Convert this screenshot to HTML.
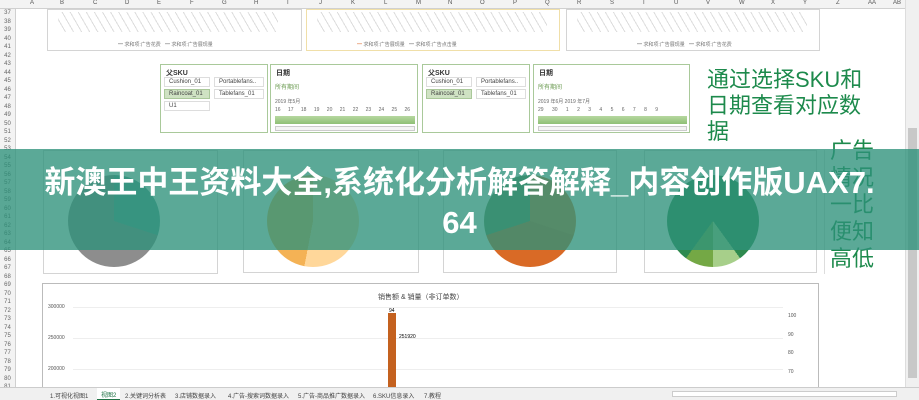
<!DOCTYPE html>
<html><head><meta charset="utf-8"><style>
*{margin:0;padding:0;box-sizing:border-box}
body{width:919px;height:400px;overflow:hidden;background:#fff;font-family:"Liberation Sans","Noto Sans CJK SC",sans-serif;position:relative}
.a{position:absolute}
.colh{top:0;left:0;width:905px;height:9px;background:#f3f3f3;border-bottom:1px solid #d0d0d0;font-size:6px;color:#555}
.colh span{position:absolute;top:0}
.rowh{left:0;top:9px;width:16px;height:378px;background:#f3f3f3;border-right:1px solid #d0d0d0;font-size:6px;color:#666;line-height:8.5px;text-align:center}
.box{border:1px solid #d4d4d4;background:#fff}
.sl{border:1px solid #a9c99a;background:#fff;font-size:6px;color:#333}
.sl b{position:absolute;left:5px;top:3px;font-size:7px}
.it{position:absolute;border:1px solid #ddd;height:10px;line-height:9px;padding-left:4px;font-size:6px;color:#444;width:46px}
.sel{background:#cfe2c3;border-color:#aac89a}
.bar{position:absolute;height:8px;background:linear-gradient(#b6d7a0,#8fbf75)}
.scr{position:absolute;height:5px;border:1px solid #ccc;background:#f4f4f4}
.pie{position:absolute;width:92px;height:92px;border-radius:50%}
.big{color:#1d8a4c;font-size:22px;line-height:26px}
.tab{top:387px;left:0;width:919px;height:13px;background:#f0f0f0;border-top:1px solid #ccc;font-size:6px;color:#444}
.tab span{position:absolute;top:3px}
</style></head><body>
<div class="a colh"><span style="left:30px">A</span><span style="left:60px">B</span><span style="left:93px">C</span><span style="left:125px">D</span><span style="left:157px">E</span><span style="left:190px">F</span><span style="left:222px">G</span><span style="left:254px">H</span><span style="left:287px">I</span><span style="left:319px">J</span><span style="left:351px">K</span><span style="left:384px">L</span><span style="left:416px">M</span><span style="left:448px">N</span><span style="left:480px">O</span><span style="left:513px">P</span><span style="left:545px">Q</span><span style="left:577px">R</span><span style="left:610px">S</span><span style="left:642px">T</span><span style="left:674px">U</span><span style="left:706px">V</span><span style="left:739px">W</span><span style="left:771px">X</span><span style="left:803px">Y</span><span style="left:836px">Z</span><span style="left:868px">AA</span><span style="left:893px">AB</span></div>
<div class="a rowh">37<br>38<br>39<br>40<br>41<br>42<br>43<br>44<br>45<br>46<br>47<br>48<br>49<br>50<br>51<br>52<br>53<br>54<br>55<br>56<br>57<br>58<br>59<br>60<br>61<br>62<br>63<br>64<br>65<br>66<br>67<br>68<br>69<br>70<br>71<br>72<br>73<br>74<br>75<br>76<br>77<br>78<br>79<br>80<br>81</div>
<div class="a" style="left:905px;top:0;width:14px;height:400px;background:#f0f0f0;border-left:1px solid #ddd"><div class="a" style="left:2px;top:128px;width:9px;height:250px;background:#c8c8c8"></div></div>

<div class="a box" style="left:47px;top:9px;width:255px;height:42px"><div class="a" style="left:70px;top:31px;font-size:5px;color:#777">━ 求和项:广告花费 &nbsp; ━ 求和项:广告展现量</div><div class="a" style="left:10px;top:2px;width:220px;height:20px;background:repeating-linear-gradient(60deg,transparent 0 6px,#ddd 6px 7px)"></div></div>
<div class="a box" style="left:306px;top:9px;width:254px;height:42px;border-color:#f0dfa8"><div class="a" style="left:50px;top:31px;font-size:5px;color:#777"><span style="color:#e07a40">━</span> 求和项:广告展现量 &nbsp; ━ 求和项:广告点击量</div><div class="a" style="left:10px;top:2px;width:230px;height:20px;background:repeating-linear-gradient(60deg,transparent 0 6px,#ddd 6px 7px)"></div></div>
<div class="a box" style="left:566px;top:9px;width:254px;height:42px"><div class="a" style="left:70px;top:31px;font-size:5px;color:#777">━ 求和项:广告展现量 &nbsp; ━ 求和项:广告花费</div><div class="a" style="left:10px;top:2px;width:230px;height:20px;background:repeating-linear-gradient(60deg,transparent 0 6px,#ddd 6px 7px)"></div></div>

<div class="a sl" style="left:160px;top:64px;width:108px;height:69px"><b>父SKU</b><div class="it" style="left:3px;top:12px">Cushion_01</div><div class="it" style="left:53px;top:12px;width:50px">Portablefans..</div><div class="it sel" style="left:3px;top:24px">Raincoat_01</div><div class="it" style="left:53px;top:24px;width:50px">Tablefans_01</div><div class="it" style="left:3px;top:36px">U1</div></div>
<div class="a sl" style="left:270px;top:64px;width:148px;height:69px"><b>日期</b><div class="a" style="left:4px;top:17px;color:#6a9a50">所有期间</div><div class="a" style="left:4px;top:33px;font-size:5px;color:#666">2019 年5月</div><div class="a" style="left:4px;top:42px;font-size:5px;color:#666;word-spacing:6px">16 17 18 19 20 21 22 23 24 25 26</div><div class="bar" style="left:4px;top:51px;width:140px"></div><div class="scr" style="left:4px;top:61px;width:140px"></div></div>
<div class="a sl" style="left:422px;top:64px;width:108px;height:69px"><b>父SKU</b><div class="it" style="left:3px;top:12px">Cushion_01</div><div class="it" style="left:53px;top:12px;width:50px">Portablefans..</div><div class="it sel" style="left:3px;top:24px">Raincoat_01</div><div class="it" style="left:53px;top:24px;width:50px">Tablefans_01</div></div>
<div class="a sl" style="left:533px;top:64px;width:157px;height:69px"><b>日期</b><div class="a" style="left:4px;top:17px;color:#6a9a50">所有期间</div><div class="a" style="left:4px;top:33px;font-size:5px;color:#666">2019 年6月 2019 年7月</div><div class="a" style="left:4px;top:42px;font-size:5px;color:#666;word-spacing:7px">29 30 1 2 3 4 5 6 7 8 9</div><div class="bar" style="left:4px;top:51px;width:149px"></div><div class="scr" style="left:4px;top:61px;width:149px"></div></div>

<div class="a big" style="left:707px;top:67px">通过选择SKU和<br>日期查看对应数<br>据</div>
<div class="a big" style="left:830px;top:137px;line-height:27px">广告<br>情况<br>一比<br>便知<br>高低</div>

<div class="a box" style="left:43px;top:150px;width:175px;height:124px"><div class="pie" style="left:24px;top:24px;background:conic-gradient(#5e9f97 0 30%,#8d8d8d 30% 100%)"></div></div>
<div class="a box" style="left:243px;top:150px;width:176px;height:123px"><div class="pie" style="left:23px;top:24px;background:conic-gradient(#ffd79a 0 53%,#f4b255 53% 100%)"></div></div>
<div class="a box" style="left:443px;top:150px;width:174px;height:123px"><div class="pie" style="left:40px;top:24px;background:conic-gradient(#e3762f 0 30%,#d96a26 30% 70%,#6b8f5a 70% 100%)"></div></div>
<div class="a box" style="left:644px;top:150px;width:173px;height:123px"><div class="pie" style="left:22px;top:24px;background:conic-gradient(#2e8a4f 0 40%,#a7cf8a 40% 50%,#74a845 50% 60%,#2e8a4f 60%)"></div></div>
<div class="a" style="left:824px;top:150px;width:1px;height:124px;background:#ddd"></div>

<div class="a box" style="left:42px;top:283px;width:777px;height:106px;border-color:#bbb">
<div class="a" style="left:335px;top:8px;font-size:7px;color:#444">销售额 &amp; 销量（非订单数）</div>
<div class="a" style="left:30px;top:23px;width:710px;height:1px;background:#eee"></div>
<div class="a" style="left:30px;top:54px;width:710px;height:1px;background:#eee"></div>
<div class="a" style="left:30px;top:85px;width:710px;height:1px;background:#eee"></div>
<div class="a" style="left:5px;top:20px;font-size:5px;color:#555">300000</div>
<div class="a" style="left:5px;top:51px;font-size:5px;color:#555">250000</div>
<div class="a" style="left:5px;top:82px;font-size:5px;color:#555">200000</div>
<div class="a" style="left:345px;top:29px;width:8px;height:80px;background:#c4611f"></div>
<div class="a" style="left:346px;top:24px;font-size:5px">94</div>
<div class="a" style="left:356px;top:50px;font-size:5px">251920</div>
<div class="a" style="left:745px;top:23px;font-size:5px;color:#555;line-height:18.5px">100<br>90<br>80<br>70<br>60</div>
</div>

<div class="a tab"><span style="left:50px">1.可视化视图1</span><span style="left:97px;top:0;height:12px;padding:2px 4px;background:#fff;color:#217346;border-bottom:1px solid #217346">视图2</span><span style="left:125px">2.关键词分析表</span><span style="left:175px">3.店铺数据录入</span><span style="left:228px">4.广告-搜索词数据录入</span><span style="left:298px">5.广告-商品推广数据录入</span><span style="left:373px">6.SKU信息录入</span><span style="left:424px">7.教程</span><div class="a" style="left:672px;top:3px;width:225px;height:6px;background:#fff;border:1px solid #ccc"></div></div>

<div class="a" style="left:0;top:149px;width:919px;height:101px;background:rgba(45,145,122,0.78)"></div>
<div class="a" style="left:0;top:163px;width:919px;text-align:center;color:#fff;font-weight:bold;font-size:31px;line-height:40px;white-space:nowrap">新澳王中王资料大全,系统化分析解答解释_内容创作版UAX7.<br>64</div>
</body></html>
